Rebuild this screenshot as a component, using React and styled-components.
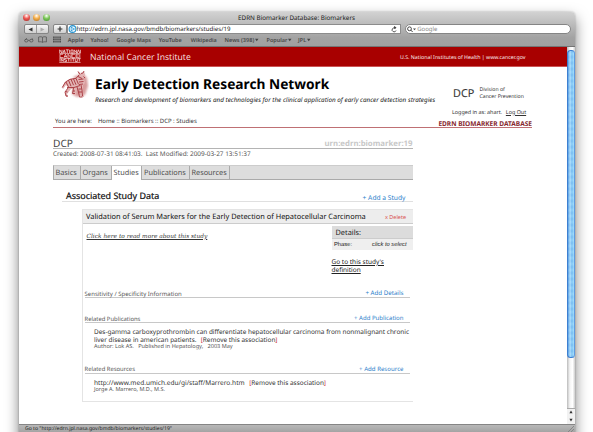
import React from 'react';
import styled, { createGlobalStyle } from 'styled-components';

const GlobalStyle = createGlobalStyle`
  html, body { margin: 0; padding: 0; background: #fff; }
  body {
    width: 593px;
    height: 432px;
    overflow: hidden;
    font-family: "Noto Sans", "Open Sans", sans-serif;
    text-rendering: geometricPrecision;
    color: #222;
  }
  * { box-sizing: border-box; }
`;

const Desktop = styled.div`
  width: 593px;
  height: 432px;
  padding: 12px 18.5px 0 19px;
  overflow: hidden;
  background: #fff;
`;
const BrowserWindow = styled.div`
  height: 440px;
  display: flex;
  flex-direction: column;
  border-radius: 4px 4px 0 0;
  background: #fff;
  box-shadow: 0 6px 14px 0 rgba(0, 0, 0, 0.5), 0 0 2px rgba(0, 0, 0, 0.3);
  overflow: visible;
`;

/* Browser chrome */
const Chrome = styled.div`
  height: 34.5px;
  flex: none;
  border-radius: 4px 4px 0 0;
  background: linear-gradient(#d2d2d2, #bcbcbc 35%, #a3a3a3 75%, #a0a0a0);
  border-bottom: 1px solid #757575;
`;
const TitleBar = styled.div`
  height: 11px;
  display: flex;
  align-items: center;
  padding-left: 4px;
  gap: 3px;
`;
const Light = styled.i`
  width: 7px;
  height: 7px;
  border-radius: 50%;
  background: radial-gradient(circle at 50% 25%, #fff 0, ${(p) => p.$tone} 45%, ${(p) => p.$edge} 100%);
`;
const WindowTitle = styled.div`
  margin-left: 185px;
  font-size: 6.33px;
  line-height: 10px;
  white-space: nowrap;
  color: #222;
`;
const Toolbar = styled.div`
  height: 11px;
  display: flex;
  align-items: center;
  padding: 1px 4px 0 4.5px;
`;
const ButtonGroup = styled.div`
  display: flex;
  height: 10px;
  border: 1px solid #858585;
  border-radius: 2px;
  background: linear-gradient(#f8f8f8, #cfcfcf);
  margin-right: ${(p) => p.$gap || 0}px;
`;
const ToolButton = styled.button`
  width: ${(p) => p.$w}px;
  padding: 0;
  border: 0;
  border-left: ${(p) => (p.$split ? '1px solid #999' : '0')};
  background: none;
  display: flex;
  align-items: center;
  justify-content: center;
`;
const AddressBar = styled.div`
  width: 335px;
  height: 10px;
  display: flex;
  align-items: center;
  background: #fff;
  border: 1px solid #8c8c8c;
  padding: 0 3px 0 0;
  font-size: 6.12px;
  line-height: 8px;
  color: #222;
  svg:last-child { margin-left: auto; }
`;
const SearchBox = styled.div`
  width: 166px;
  height: 10px;
  margin-left: 3.5px;
  display: flex;
  align-items: center;
  gap: 1px;
  padding-left: 1.5px;
  border-radius: 5px;
  border: 1px solid #858585;
  background: #fff;
  font-size: 6px;
  line-height: 8px;
  color: #888;
`;
const Bookmarks = styled.div`
  height: 11px;
  display: flex;
  align-items: center;
  padding: 0.5px 0 0 4.5px;
  font-weight: 600;
  line-height: 10px;
  color: #4a4a4a;
  white-space: nowrap;
`;
const Bookmark = styled.span`
  width: ${(p) => p.$w}px;
  flex: none;
  display: flex;
  align-items: center;
  gap: 1px;
  font-size: ${(p) => p.$size || 5.5}px;
`;

/* Page */
const Viewport = styled.div`
  display: flex;
  height: 377px;
  flex: none;
`;
const Page = styled.main`
  width: 548px;
  flex: none;
`;
const Banner = styled.div`
  height: 20.5px;
  background: #a80000;
  color: #fff;
  display: flex;
  align-items: center;
  padding: 0 41.5px 0 40px;
  border-bottom: 1px solid #c55;
`;
const Institute = styled.span`
  margin-left: 9px;
  padding-top: 1px;
  font-size: 8.61px;
  line-height: 12px;
  color: #f3dede;
`;
const BannerLinks = styled.span`
  margin-left: auto;
  padding-top: 2px;
  font-size: 5.25px;
  line-height: 8px;
  color: #fbeeee;
  white-space: nowrap;
`;
const Header = styled.header`
  height: 60.5px;
  margin: 0 35px 0 34px;
  display: flex;
  flex-direction: column;
  border-bottom: 1px solid #bf7074;
`;
const HeaderTop = styled.div`
  height: 46px;
  display: flex;
`;
const Masthead = styled.div`
  width: 345px;
  margin-left: 6px;
  white-space: nowrap;
  padding-top: 9px;
`;
const SiteTitle = styled.h1`
  margin: 0;
  font-size: 13.72px;
  line-height: 18px;
  color: #000;
`;
const Tagline = styled.div`
  font-size: 6.34px;
  line-height: 9px;
  margin-top: 0.5px;
  font-style: italic;
  color: #222;
`;
const Zebra = styled.svg`
  margin: 3px 0 0 8px;
  flex: none;
`;
const Division = styled.div`
  margin-top: 18.5px;
  margin-left: 13px;
  height: 14px;
  display: flex;
  align-items: center;
  gap: 5px;
  font-size: 5.17px;
  white-space: nowrap;
  color: #333;
`;
const DivisionName = styled.span`
  display: flex;
  flex-direction: column;
  line-height: 6.5px;
`;
const DivisionMark = styled.span`
  width: 21.5px;
  font-family: "Open Sans", sans-serif;
  font-size: 10.9px;
  line-height: 13px;
  padding-top: 1px;
  -webkit-text-stroke: 0.15px #333;
  color: #333;
`;
const Account = styled.div`
  height: 8px;
  margin: 8px 0 0 12px;
  display: flex;
  gap: 3.8px;
  font-size: 5.4px;
  line-height: 8px;
  white-space: nowrap;
  color: #333;
`;
const Trail = styled.div`
  height: 14px;
  display: flex;
  align-items: center;
  padding: 2px 0 0 2px;
  font-size: 5.98px;
  line-height: 8px;
  color: #333;
  white-space: nowrap;
`;
const Location = styled.span`
  margin-left: 6px;
`;
const AppName = styled.strong`
  margin: 5px 0 0 auto;
  font-size: 6.55px;
  color: #86272e;
`;
const Main = styled.section`
  width: 360px;
  margin-left: 33.5px;
  white-space: nowrap;
`;
const Heading = styled.div`
  height: 21px;
  margin-left: 0.5px;
  display: flex;
  justify-content: space-between;
  align-items: flex-end;
  border-bottom: 1.5px solid #b4b4b4;
`;
const RecordName = styled.h2`
  margin: 0 0 -1px;
  font-size: 10.17px;
  font-weight: 400;
  line-height: 12px;
  color: #444;
`;
const Urn = styled.span`
  margin-bottom: -1px;
  font-size: 7.79px;
  font-weight: 700;
  line-height: 10px;
  color: #c8c8c8;
`;
const Stamp = styled.div`
  margin-left: 0.5px;
  height: 16px;
  padding-top: 1px;
  font-size: 6.43px;
  line-height: 8px;
  color: #555;
`;
const Tabs = styled.nav`
  height: 15px;
  display: flex;
  background: #ddd;
  border-top: 1px solid #ccc;
  border-bottom: 1px solid #aaa;
  border-left: 1px solid #aaa;
`;
const Tab = styled.a`
  width: ${(p) => p.$w}px;
  padding: 1px 0 0 2px;
  height: ${(p) => (p.$active ? 14 : 13)}px;
  font-size: 7.32px;
  line-height: 13px;
  color: #505050;
  background: ${(p) => (p.$active ? '#fff' : 'transparent')};
  border-right: 1px solid #aaa;
`;
const SectionHead = styled.div`
  height: 22.5px;
  margin-left: 9.5px;
  padding: 0 7px 0 4px;
  display: flex;
  justify-content: space-between;
  border-bottom: 1px solid #e0e0e0;
`;
const SectionTitle = styled.h3`
  margin: 10px 0 0;
  font-size: 8.95px;
  font-weight: 400;
  -webkit-text-stroke: 0.2px #111;
  line-height: 12px;
  color: #111;
`;
const AddLink = styled.a`
  align-self: flex-end;
  margin-bottom: ${(p) => p.$drop || 0}px;
  font-size: ${(p) => p.$size || 6.1}px;
  line-height: 8px;
  color: #2f7fcb;
`;
const Study = styled.article`
  height: 193px;
  margin: 7px 0 0 29px;
  border: 1px solid #e4e4e4;
  border-right: 0;
`;
const StudyHead = styled.div`
  height: 13.5px;
  background: #ededed;
  border-bottom: 1px solid #ccc;
  display: flex;
  align-items: center;
  justify-content: space-between;
  padding: 2px 6.5px 0 3.5px;
  font-size: 7.42px;
  line-height: 11px;
  color: #111;
`;
const Delete = styled.a`
  font-size: 5.48px;
  color: #d95050;
`;
const Summary = styled.div`
  height: 65px;
  display: flex;
  justify-content: space-between;
  align-items: flex-start;
`;
const ReadMore = styled.a`
  margin: 8px 0 0 4px;
  font: italic 5.89px/10px "DejaVu Serif", serif;
  text-decoration: underline;
  text-decoration-thickness: 0.6px;
  color: #333;
`;
const Side = styled.aside`
  width: 81px;
  padding-top: 2px;
`;
const DetailsTitle = styled.div`
  height: 13px;
  padding: 1px 0 0 4px;
  background: #dcdcdc;
  border-bottom: 1px solid #ccc;
  font-size: 7.33px;
  line-height: 12px;
`;
const Phase = styled.div`
  height: 11.5px;
  padding: 0 6px 0 2.5px;
  background: #efefef;
  display: flex;
  justify-content: space-between;
  font-family: "Liberation Sans", sans-serif;
  font-size: 5.8px;
  line-height: 12px;
`;
const Definition = styled.a`
  display: block;
  margin-top: 8px;
  font-size: 6.49px;
  line-height: 7.7px;
  text-decoration: underline;
  text-decoration-thickness: 0.6px;
  white-space: normal;
  width: 60px;
`;
const Group = styled.section`
  height: ${(p) => p.$h}px;
`;
const GroupHead = styled.div`
  height: 9.5px;
  margin: 0 2.5px 0 2px;
  padding: 1px 6.5px 0 0;
  display: flex;
  justify-content: space-between;
  border-bottom: 1px solid #c8c8c8;
  font-size: ${(p) => p.$size}px;
  line-height: 8px;
  color: #555;
`;
const Entry = styled.div`
  padding: 5px 0 0 11.5px;
  font-size: ${(p) => p.$size}px;
  line-height: 7.7px;
  color: #333;
`;
const Bracket = styled.span`
  color: ${(p) => (p.$plain ? '#333' : '#c33')};
`;
const Removal = styled.span`
  margin-left: ${(p) => p.$gap}px;
  font-size: 6.45px;
`;
const Source = styled.div`
  font-size: ${(p) => p.$size}px;
  line-height: 7px;
  color: #555;
  white-space: pre;
`;

/* Scroll bar and status line */
const Scrollbar = styled.div`
  width: 7.5px;
  padding-top: 2px;
  display: flex;
  flex-direction: column;
  background: linear-gradient(90deg, #bbb, #f4f4f4 35%, #fff 70%, #ccc);
`;
const Thumb = styled.div`
  height: 308px;
  margin-top: 1px;
  border-radius: 3.5px;
  border: 1px solid #3d7fd0;
  border-right-color: #5f9be0;
  background:
    linear-gradient(90deg, rgba(60, 135, 220, 0.55), rgba(210, 240, 255, 0.6) 35%, rgba(110, 185, 245, 0.2) 65%, rgba(180, 235, 255, 0.7)),
    repeating-linear-gradient(#6db5ee 0, #8bcdf8 3px, #6db5ee 6px);
`;
const Arrows = styled.div`
  height: 16px;
  margin-top: auto;
  display: flex;
  flex-direction: column;
  justify-content: space-around;
  align-items: center;
  background: #f2f2f2;
  border-top: 1px solid #aaa;
`;
const StatusBar = styled.div`
  height: 12px;
  flex: none;
  padding-left: 6px;
  display: flex;
  justify-content: space-between;
  background: linear-gradient(#b8b8b8, #a2a2a2 70%);
  border-top: 1px solid #858585;
  font-size: 5.1px;
  line-height: 8px;
  color: #222;
`;

const Triangle = ({ d, color = '#333', size = 5 }) => (
  <svg width={size} height={size} viewBox="0 0 10 10"><path d={d} fill={color} /></svg>
);
const Remove = ({ gap }) => (
  <Removal $gap={gap}><Bracket>[</Bracket>Remove this association<Bracket>]</Bracket></Removal>
);

const InstituteLogo = () => (
  <svg width="22" height="14" viewBox="0 0 22 14" stroke="#f3d6d6" strokeWidth="0.8" fill="none">
    <path d="M.7 4V.8L3 4V.8M4 4 5.2.8 6.4 4M4.3 3h1.8M6.8.8h3M8.3.8V4M10.6.8V4M12 1h2v3h-2zM15.2 4V.8L17.6 4V.8M18.4 4l1-3.2L20.8 4M21.4.8V4" />
    <path d="M4 5.2H1v3.5h3M5 8.7l1.5-3.5L8 8.7M5.5 7.5h2M9 8.7V5.2l3 3.5V5.2M16 5.2h-3v3.5h3M20 5.2h-3v3.5h3M17 7h2.5M20.8 8.7V5.2" />
    <path d="M1 9.7v2.8M2.3 12.5V9.7l2 2.8V9.7M7.5 9.7h-2v1.3h2v1.5h-2M8.5 9.7h2.5M9.7 9.7v2.8M12 9.7v2.8M13 9.7h2.6M14.3 9.7v2.8M16.3 9.7v2.8h2V9.7M19.2 9.7h2.3M20.3 9.7v2.8" />
    <path d="M.3 13.4h21.3M.3 4.6h21.3M.3 9.2h21.3" strokeWidth=".7" />
  </svg>
);

const ZebraLogo = () => (
  <Zebra width="28" height="29" viewBox="0 0 28 29">
    <defs>
      <filter id="soft" x="-30%" y="-30%" width="160%" height="160%"><feGaussianBlur stdDeviation="1.2" /></filter>
    </defs>
    <path d="M12 7 22 3l4 5 1 8-3 9-8 2-5-3 1-6 6-5z" fill="#cf8484" opacity=".8" filter="url(#soft)" />
    <path d="M1 17 4 12l5-3 7-1 2-3-1-4 3 3 2-1 1-2 1 4-1 3 1 5-2 2 0 5 1 7h-3l-1-7-3-1-1 6h-3l1-6-3 0-4 5 1 3H5l-1-4 3-6-2-2-3 4z" fill="#e3b4b4" />
    <path d="M1.300 17.500 4.500 12 9 9.300l6-1L18 5M17 1.500l2 3M20 3.500l2-.5 1-2M5 12l2.500 5M7.500 10.200l2.500 6M10 9.200l2.500 6M12.500 8.800l2.500 6M15 8.300l2.500 6M17 6.500l4 2M17.500 9.500l5-.5M18 12l4.500-.5M18 14.500l4-.5M6 17.500l7 0 6-2M7 18l-3 4 1 4h2M12.500 18l-1 5.500h2.500M16 17l1.500 5 1 5h3M20 15l1 5 .5 6M17.500 19h3M18 22h3M4.500 21.500l2 .5M12 21h2M22.500 6.500 24 8" fill="none" stroke="#a02c33" strokeWidth=".85" />
  </Zebra>
);

const bookmarks = [
  ['Apple', 22.7, 5.61], ['Yahoo!', 26, 5.5], ['Google Maps', 42.3, 5.44], ['YouTube', 32, 5.5],
  ['Wikipedia', 33.8, 5.4], ['News (398)', 42, 5.6, true], ['Popular', 31.5, 5.5, true], ['JPL', 20, 5.5, true],
];
const tabs = [['Basics', 27], ['Organs', 31], ['Studies', 30.5], ['Publications', 47.5], ['Resources', 40.5]];

export default function App() {
  return (
    <Desktop>
      <GlobalStyle />
      <BrowserWindow>
        <Chrome>
          <TitleBar>
            <Light $tone="#ef5a55" $edge="#a32522" />
            <Light $tone="#f5b04c" $edge="#b06c1c" />
            <Light $tone="#7fc95c" $edge="#3f8a2b" />
            <WindowTitle>EDRN Biomarker Database: Biomarkers</WindowTitle>
          </TitleBar>
          <Toolbar>
            <ButtonGroup $gap={4}>
              <ToolButton $w={11.5}><Triangle d="M9 1v8L1 5z" /></ToolButton>
              <ToolButton $w={12} $split><Triangle d="M1 1v8l8-4z" color="#aaa" /></ToolButton>
            </ButtonGroup>
            <ButtonGroup>
              <ToolButton $w={11.5}><Triangle d="M4 1h2v3h3v2H6v3H4V6H1V4h3z" size={6} /></ToolButton>
            </ButtonGroup>
            <AddressBar>
              <svg width="9" height="8" viewBox="0 0 9 8">
                <circle cx="4.5" cy="4" r="3.4" fill="#e9f7ff" stroke="#2693d1" strokeWidth="1.1" />
                <path d="M2.500 2 6.500 4 2.500 6M4 1.500 3 4l1 2.500" fill="none" stroke="#2693d1" strokeWidth=".7" />
              </svg>
              http://edrn.jpl.nasa.gov/bmdb/biomarkers/studies/19
              <svg width="6" height="7" viewBox="0 0 6 7">
                <path d="M4.6 2.5A2 2 0 1 0 5 4.5" fill="none" stroke="#444" strokeWidth=".9" />
                <path d="M3 0l2.6 1.5L3 3z" fill="#444" />
              </svg>
            </AddressBar>
            <SearchBox>
              <svg width="9" height="7" viewBox="0 0 9 7">
                <circle cx="2.5" cy="2.8" r="1.9" fill="none" stroke="#444" />
                <path d="M4 4.2 5.6 6" stroke="#444" />
                <path d="M6 2.500h3L7.500 4.300z" fill="#444" />
              </svg>
              Google
            </SearchBox>
          </Toolbar>
          <Bookmarks>
            <Bookmark $w={14.5}>
              <svg width="10" height="6" viewBox="0 0 10 6" fill="none" stroke="#555" strokeWidth=".8">
                <ellipse cx="2.3" cy="3.7" rx="1.7" ry="1.3" /><ellipse cx="7.3" cy="3.7" rx="1.7" ry="1.3" /><path d="M4 3.300h1.600M.8 3 3 1.200M8.800 3 8 1.200" />
              </svg>
            </Bookmark>
            <Bookmark $w={15}>
              <svg width="9" height="7" viewBox="0 0 9 7" fill="none" stroke="#555" strokeWidth=".8">
                <path d="M4.500 1.300C3.500.6 2 .6.600 1v5c1.500-.4 3-.3 3.900.4C5.500 5.700 7 5.600 8.400 6V1C7 .6 5.500.6 4.500 1.300zv5" />
              </svg>
            </Bookmark>
            <Bookmark $w={14.8}>
              <svg width="8" height="7" viewBox="0 0 8 7" fill="#505050">
                <path d="M0 .5h8v6H0z" /><path d="M0 2.300h8M0 4.500h8M2 0v7M4 0v7M6 0v7" stroke="#aaa" strokeWidth=".5" />
              </svg>
            </Bookmark>
            {bookmarks.map(([name, w, size, menu]) => (
              <Bookmark key={name} $w={w} $size={size}>
                {name}
                {menu && <Triangle d="M0 2h10L5 9z" size={3.5} color="#444" />}
              </Bookmark>
            ))}
          </Bookmarks>
        </Chrome>

        <Viewport>
          <Page>
            <Banner>
              <InstituteLogo />
              <Institute>National Cancer Institute</Institute>
              <BannerLinks>U.S. National Institutes of Health | www.cancer.gov</BannerLinks>
            </Banner>
            <Header>
              <HeaderTop>
                <ZebraLogo />
                <Masthead>
                  <SiteTitle>Early Detection Research Network</SiteTitle>
                  <Tagline>Research and development of biomarkers and technologies for the clinical application of early cancer detection strategies</Tagline>
                </Masthead>
                <div>
                  <Division>
                    <DivisionMark>DCP</DivisionMark>
                    <DivisionName>
                      <span>Division of</span>
                      <span>Cancer Prevention</span>
                    </DivisionName>
                  </Division>
                  <Account>
                    <span>Logged in as: ahart.</span>
                    <u>Log Out</u>
                  </Account>
                </div>
              </HeaderTop>
              <Trail>
                You are here:
                <Location>Home :: Biomarkers :: DCP : Studies</Location>
                <AppName>EDRN BIOMARKER DATABASE</AppName>
              </Trail>
            </Header>
            <Main>
              <Heading>
                <RecordName>DCP</RecordName>
                <Urn>urn:edrn:biomarker:19</Urn>
              </Heading>
              <Stamp>Created: 2008-07-31 08:41:03.&nbsp; Last Modified: 2009-03-27 13:51:37</Stamp>
              <Tabs>
                {tabs.map(([name, w]) => (
                  <Tab key={name} $w={w} $active={name === 'Studies'}>{name}</Tab>
                ))}
              </Tabs>
              <SectionHead>
                <SectionTitle>Associated Study Data</SectionTitle>
                <AddLink $size={6.68} $drop={-1}>+ Add a Study</AddLink>
              </SectionHead>
              <Study>
                <StudyHead>
                  Validation of Serum Markers for the Early Detection of Hepatocellular Carcinoma
                  <Delete>x Delete</Delete>
                </StudyHead>
                <Summary>
                  <ReadMore>Click here to read more about this study</ReadMore>
                  <Side>
                    <DetailsTitle>Details:</DetailsTitle>
                    <Phase><span>Phase:</span><em>click to select</em></Phase>
                    <Definition>Go to this study's definition</Definition>
                  </Side>
                </Summary>
                <Group $h={25}>
                  <GroupHead $size={6.01}>
                    Sensitivity / Specificity Information<AddLink $size={6.16}>+ Add Details</AddLink>
                  </GroupHead>
                </Group>
                <Group $h={50.5}>
                  <GroupHead $size={5.88}>
                    Related Publications<AddLink $size={6.04}>+ Add Publication</AddLink>
                  </GroupHead>
                  <Entry $size={6.45}>
                    Des-gamma carboxyprothrombin can differentiate hepatocellular carcinoma from nonmalignant chronic<br />
                    liver disease in american patients.<Remove gap={4.2} />
                    <Source $size={5.57}>Author: Lok AS.   Published in Hepatology,   2003 May</Source>
                  </Entry>
                </Group>
                <Group $h={36}>
                  <GroupHead $size={5.87}>
                    Related Resources<AddLink $size={6.1}>+ Add Resource</AddLink>
                  </GroupHead>
                  <Entry $size={6.56}>
                    http://www.med.umich.edu/gi/staff/Marrero.htm<Remove gap={4.5} />
                    <Source $size={5.5}>Jorge A. Marrero, M.D., M.S.</Source>
                  </Entry>
                </Group>
              </Study>
            </Main>
          </Page>
          <Scrollbar>
            <Thumb />
            <Arrows>
              <Triangle d="M1 8h8L5 1z" size={4} />
              <Triangle d="M1 2h8L5 9z" size={4} />
            </Arrows>
          </Scrollbar>
        </Viewport>
        <StatusBar>
          Go to "http://edrn.jpl.nasa.gov/bmdb/biomarkers/studies/19"
          <svg width="8" height="9" viewBox="0 0 8 9"><path d="M0 8 7 1M3 8l4-4M6 8l1-1" stroke="#777" strokeWidth=".7" /></svg>
        </StatusBar>
      </BrowserWindow>
    </Desktop>
  );
}
